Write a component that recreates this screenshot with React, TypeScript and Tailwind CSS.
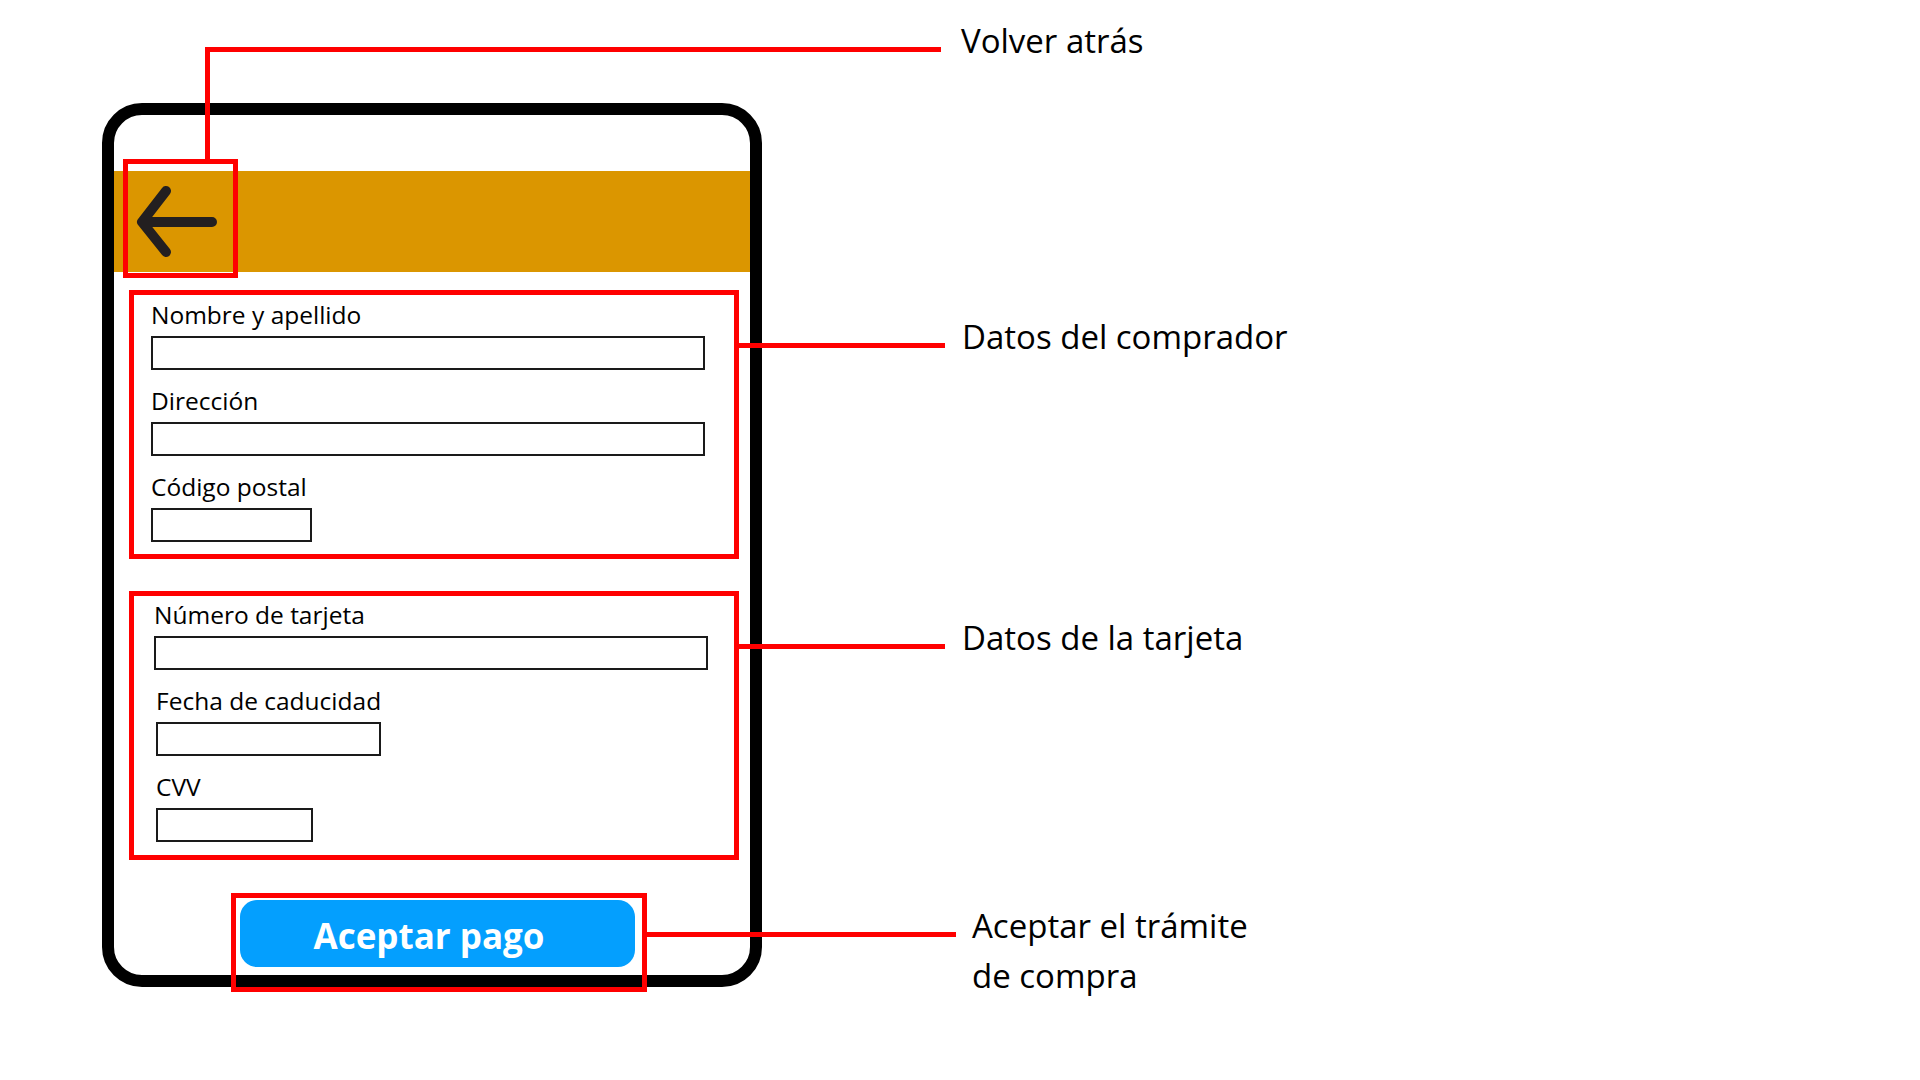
import React from "react";

const F = "font-['Open_Sans',sans-serif]";

function Field({ label, width, extra = "" }: { label: string; width: string; extra?: string }) {
  return (
    <div className={`flex flex-col shrink-0 ${extra}`}>
      <div className="h-[26px] leading-[26px] text-[24.5px] text-black whitespace-nowrap">{label}</div>
      <div className={`mt-[8px] h-[34px] shrink-0 border-2 border-[#1a1a1a] bg-white ${width}`} />
    </div>
  );
}

export default function App() {
  return (
    <div className={`relative w-[1920px] h-[1080px] bg-white overflow-hidden pl-[102px] pt-[103px] ${F}`}>
      {/* Phone */}
      <div className="relative w-[660px] h-[884px] border-[12px] border-black rounded-[40px] flex flex-col">
        <div className="mt-[56px] h-[101px] shrink-0 bg-[#db9600] flex items-start">
          <svg width="110" height="101" viewBox="0 0 110 101" fill="none">
            <path
              d="M52 20 L28 51 L52 81 M28 51 L98 51"
              stroke="#231f20"
              strokeWidth="10"
              strokeLinecap="round"
              strokeLinejoin="round"
            />
          </svg>
        </div>

        <div className="mt-[18px] ml-[15px] w-[610px] h-[269px] shrink-0 border-[5px] border-[#ff0000] pt-[7px] pl-[17px] flex flex-col gap-[18px]">
          <Field label="Nombre y apellido" width="w-[554px]" />
          <Field label="Dirección" width="w-[554px]" />
          <Field label="Código postal" width="w-[161px]" />
        </div>

        <div className="mt-[32px] ml-[15px] w-[610px] h-[269px] shrink-0 border-[5px] border-[#ff0000] pt-[6px] pl-[20px] flex flex-col gap-[18px]">
          <Field label="Número de tarjeta" width="w-[554px]" />
          <Field label="Fecha de caducidad" width="w-[225px]" extra="ml-[2px]" />
          <Field label="CVV" width="w-[157px]" extra="ml-[2px]" />
        </div>

        <div className="mt-[33px] ml-[117px] w-[416px] h-[99px] shrink-0 border-[5px] border-[#ff0000] pl-[4px] pt-[2px]">
          <div className="w-[395px] h-[67px] rounded-[17px] bg-[#049ffe] flex items-center justify-center pr-[17px] pt-[4px] text-white font-bold text-[35px] leading-none">
            Aceptar pago
          </div>
        </div>

        {/* back button highlight */}
        <div className="absolute left-[9px] top-[44px] w-[115px] h-[119px] border-[5px] border-[#ff0000]" />
      </div>

      {/* Annotation connectors */}
      <div className="absolute left-[205px] top-[47px] w-[5px] h-[113px] bg-[#ff0000]" />
      <div className="absolute left-[205px] top-[47px] w-[736px] h-[5px] bg-[#ff0000]" />
      <div className="absolute left-[739px] top-[343px] w-[206px] h-[5px] bg-[#ff0000]" />
      <div className="absolute left-[739px] top-[644px] w-[206px] h-[5px] bg-[#ff0000]" />
      <div className="absolute left-[647px] top-[932px] w-[309px] h-[5px] bg-[#ff0000]" />

      {/* Annotation labels */}
      <div className="absolute left-[961px] top-[16px] text-[33px] leading-[50px] text-black whitespace-nowrap">Volver atrás</div>
      <div className="absolute left-[962px] top-[312px] text-[33px] leading-[50px] text-black whitespace-nowrap">Datos del comprador</div>
      <div className="absolute left-[962px] top-[613px] text-[33px] leading-[50px] text-black whitespace-nowrap">Datos de la tarjeta</div>
      <div className="absolute left-[972px] top-[901px] text-[33px] leading-[50px] text-black whitespace-nowrap">
        Aceptar el trámite
        <br />
        de compra
      </div>
    </div>
  );
}
